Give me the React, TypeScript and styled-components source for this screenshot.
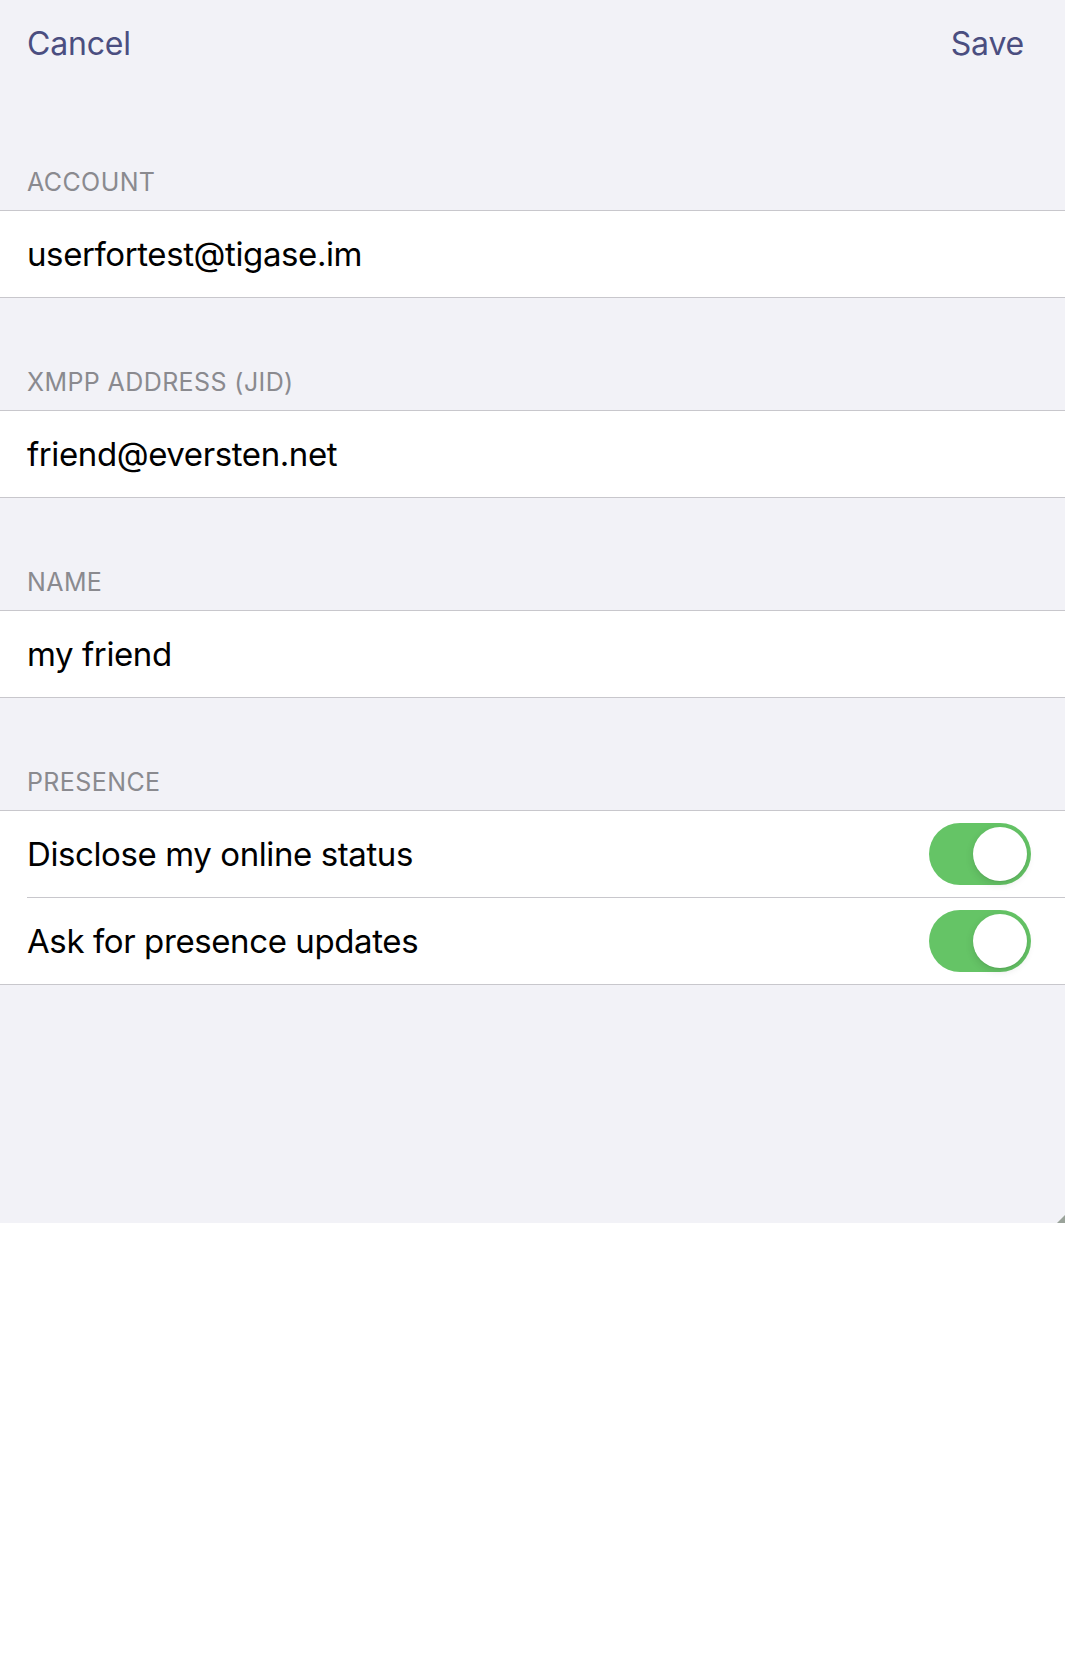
import React from "react";
import styled, { createGlobalStyle } from "styled-components";

const GlobalStyle = createGlobalStyle`
  html, body {
    margin: 0;
    padding: 0;
    background: #ffffff;
  }
  body {
    font-family: Inter, "Noto Sans", "Liberation Sans", sans-serif;
    -webkit-font-smoothing: antialiased;
  }
`;

const Screen = styled.div`
  position: relative;
  height: 1223px;
  background: #f2f2f7;
  display: flex;
  flex-direction: column;

  &::after {
    content: "";
    position: absolute;
    right: 0;
    bottom: 0;
    width: 0;
    height: 0;
    border-style: solid;
    border-width: 0 0 8px 8px;
    border-color: transparent transparent #9aa39a transparent;
  }
`;

const NavBar = styled.div`
  height: 98px;
  box-sizing: border-box;
  display: flex;
  justify-content: space-between;
  align-items: flex-start;
  padding: 22px 41px 0 27px;
`;

const NavButton = styled.button`
  background: none;
  border: none;
  padding: 0;
  margin: 0;
  font-family: inherit;
  font-size: 32px;
  line-height: 44px;
  color: #4b4e80;
  letter-spacing: -0.2px;
  cursor: pointer;
`;

const Section = styled.section`
  display: flex;
  flex-direction: column;
`;

const SectionHeader = styled.div`
  height: 112px;
  box-sizing: border-box;
  display: flex;
  align-items: flex-end;
  padding: 0 27px 13px;
  font-size: 25px;
  line-height: 30px;
  color: #8a8a8f;
  text-transform: uppercase;
  letter-spacing: 0.4px;
`;

const Group = styled.div`
  background: #ffffff;
  border-top: 1px solid #c8c7cc;
  border-bottom: 1px solid #c8c7cc;
`;

const Row = styled.div<{ $divider?: boolean }>`
  position: relative;
  height: 86px;
  box-sizing: border-box;
  display: flex;
  align-items: center;
  justify-content: space-between;
  padding: 0 34px 0 27px;
  ${(p) =>
    p.$divider
      ? `
    &::after {
      content: "";
      position: absolute;
      left: 27px;
      right: 0;
      bottom: -1px;
      height: 1px;
      background: #c8c7cc;
    }
    margin-bottom: 1px;
  `
      : ""}
`;

const RowText = styled.span`
  font-size: 33px;
  line-height: 40px;
  color: #000000;
  letter-spacing: -0.4px;
`;

const SwitchTrack = styled.div<{ $on: boolean }>`
  position: relative;
  width: 102px;
  height: 62px;
  border-radius: 31px;
  background: ${(p) => (p.$on ? "#65c466" : "#e9e9eb")};
  flex-shrink: 0;
`;

const SwitchKnob = styled.div<{ $on: boolean }>`
  position: absolute;
  top: 4px;
  ${(p) => (p.$on ? "right: 4px;" : "left: 4px;")}
  width: 54px;
  height: 54px;
  border-radius: 50%;
  background: #ffffff;
  box-shadow: 0 3px 8px rgba(0, 0, 0, 0.12), 0 1px 1px rgba(0, 0, 0, 0.06);
`;

const Toggle: React.FC<{ on: boolean }> = ({ on }) => (
  <SwitchTrack $on={on} role="switch" aria-checked={on}>
    <SwitchKnob $on={on} />
  </SwitchTrack>
);

export default function App() {
  return (
    <>
      <GlobalStyle />
      <Screen>
        <NavBar>
          <NavButton>Cancel</NavButton>
          <NavButton>Save</NavButton>
        </NavBar>

        <Section>
          <SectionHeader>Account</SectionHeader>
          <Group>
            <Row>
              <RowText>userfortest@tigase.im</RowText>
            </Row>
          </Group>
        </Section>

        <Section>
          <SectionHeader>XMPP Address (JID)</SectionHeader>
          <Group>
            <Row>
              <RowText>friend@eversten.net</RowText>
            </Row>
          </Group>
        </Section>

        <Section>
          <SectionHeader>Name</SectionHeader>
          <Group>
            <Row>
              <RowText>my friend</RowText>
            </Row>
          </Group>
        </Section>

        <Section>
          <SectionHeader>Presence</SectionHeader>
          <Group>
            <Row $divider>
              <RowText>Disclose my online status</RowText>
              <Toggle on />
            </Row>
            <Row>
              <RowText>Ask for presence updates</RowText>
              <Toggle on />
            </Row>
          </Group>
        </Section>
      </Screen>
    </>
  );
}
